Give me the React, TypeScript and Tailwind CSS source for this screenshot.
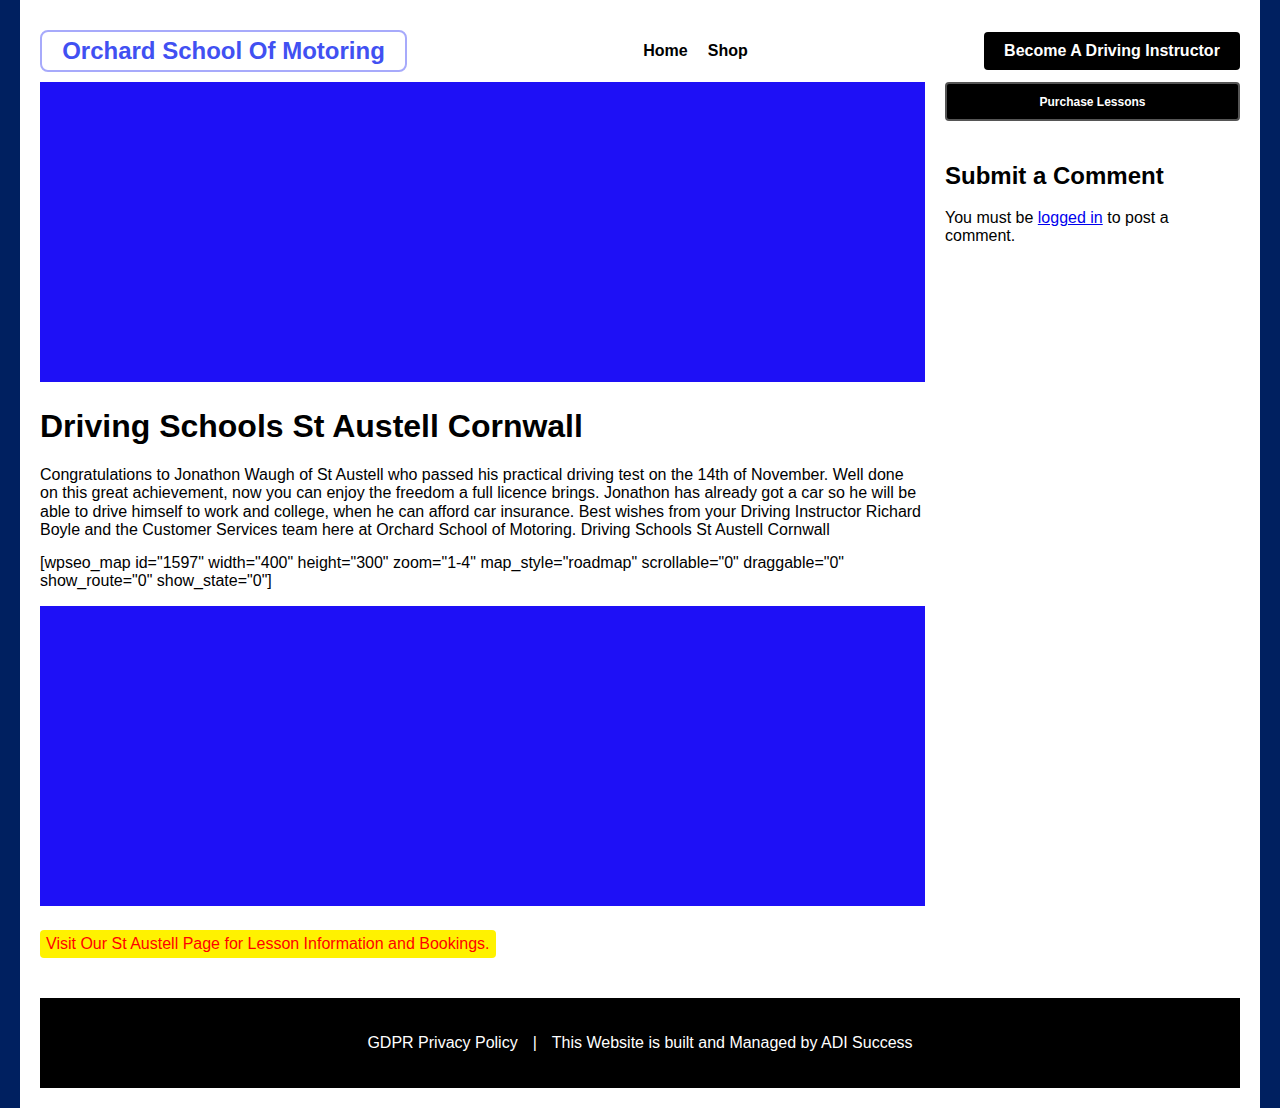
export default function App() {
  return (
    <div className="min-h-screen bg-[#002060] px-5 font-['Liberation_Sans',Arial,sans-serif] text-black">
      <div className="bg-white px-5 pb-5 pt-[30px]">
        <header className="flex items-center justify-between">
          <a
            href="#"
            className="flex h-[42px] w-[367px] items-center justify-center rounded-lg border-2 border-[#a7aafb] text-[24px] font-bold text-[#4150f2]"
          >
            Orchard School Of Motoring
          </a>
          <nav className="flex gap-5 text-[16px] font-bold">
            <a href="#">Home</a>
            <a href="#">Shop</a>
          </nav>
          <a
            href="#"
            className="flex h-[38px] w-[256px] items-center justify-center rounded bg-black text-[16px] font-bold text-white"
          >
            Become A Driving Instructor
          </a>
        </header>

        <div className="mt-[10px] flex gap-5">
          <main className="w-[885px]">
            <div className="h-[300px] bg-[#1e10f6]" />
            <h1 className="mt-6 text-[32px] font-bold leading-[40px]">Driving Schools St Austell Cornwall</h1>
            <p className="mt-[20px] text-[16px] leading-[1.15]">
              Congratulations to Jonathon Waugh of St Austell who passed his practical driving test on the 14th of November. Well done
              on this great achievement, now you can enjoy the freedom a full licence brings. Jonathon has already got a car so he will be
              able to drive himself to work and college, when he can afford car insurance. Best wishes from your Driving Instructor Richard
              Boyle and the Customer Services team here at Orchard School of Motoring. Driving Schools St Austell Cornwall
            </p>
            <p className="mt-[14px] text-[16px] leading-[1.15]">
              [wpseo_map id="1597" width="400" height="300" zoom="1-4" map_style="roadmap" scrollable="0" draggable="0"
              show_route="0" show_state="0"]
            </p>
            <div className="mt-4 h-[300px] bg-[#1e10f6]" />
            <a
              href="#"
              className="mt-6 inline-flex h-[28px] items-center rounded bg-[#fff200] px-[6px] text-[16px] text-[#ff0000]"
            >
              Visit Our St Austell Page for Lesson Information and Bookings.
            </a>
          </main>

          <aside className="w-[295px]">
            <a
              href="#"
              className="flex h-[39px] items-center justify-center rounded border-2 border-[#555555] bg-black text-[12px] font-bold text-white"
            >
              Purchase Lessons
            </a>
            <h3 className="mt-[41px] text-[24px] font-bold leading-[28px]">Submit a Comment</h3>
            <p className="mt-[19px] text-[16px] leading-[1.15]">
              You must be{' '}
              <a href="#" className="text-[#0000ee] underline">
                logged in
              </a>{' '}
              to post a comment.
            </p>
          </aside>
        </div>

        <footer className="mt-10 flex h-[90px] items-center justify-center gap-[15px] bg-black text-[16px] text-white">
          <a href="#">GDPR Privacy Policy</a>
          <span>|</span>
          <span>This Website is built and Managed by ADI Success</span>
        </footer>
      </div>
    </div>
  )
}
